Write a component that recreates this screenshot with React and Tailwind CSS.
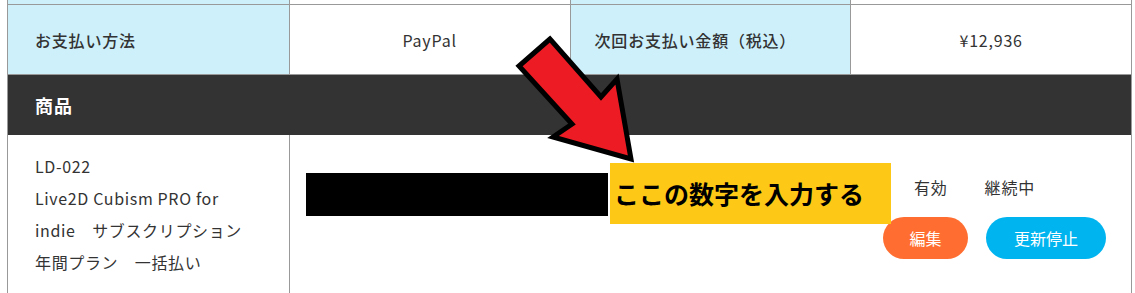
import React from 'react';

const font = { fontFamily: '"Noto Sans CJK JP", "Noto Sans", sans-serif' };

export default function App() {
  return (
    <div className="relative w-[1135px] h-[293px] overflow-hidden bg-white text-[#333]" style={font}>
      <div className="ml-[7px] w-[1125px] border-x border-[#999]">
        {/* partial row above */}
        <div className="grid grid-cols-4 h-[5px] border-b border-[#999]">
          <div className="bg-[#cdf0fb]" />
          <div className="border-l border-[#999]" />
          <div className="bg-[#cdf0fb] border-l border-[#999]" />
          <div className="border-l border-[#999]" />
        </div>

        {/* payment row */}
        <div className="grid grid-cols-4 h-[70px] border-b border-[#999] text-[16px] tracking-[0.05em]">
          <div className="bg-[#cdf0fb] flex items-center pl-[27px] font-medium">お支払い方法</div>
          <div className="border-l border-[#999] flex items-center justify-center">PayPal</div>
          <div className="bg-[#cdf0fb] border-l border-[#999] flex items-center justify-center pr-[30px] font-medium">次回お支払い金額（税込）</div>
          <div className="border-l border-[#999] flex items-center justify-center">¥12,936</div>
        </div>

        {/* section header */}
        <div className="h-[60px] bg-[#333] flex items-center pl-[27px] text-white text-[18px] font-bold tracking-[0.05em]">
          商品
        </div>

        {/* product row */}
        <div className="grid grid-cols-[281px_1fr] h-[158px]">
          <div className="flex items-center pl-[27px] text-[16px] leading-[32px] tracking-[0.04em]">
            <div>
              <div>LD-022</div>
              <div>Live2D Cubism PRO for</div>
              <div>indie　サブスクリプション</div>
              <div>年間プラン　一括払い</div>
            </div>
          </div>
          <div className="relative border-l border-[#999] flex pl-[16px] pr-[25px]">
            <div className="mt-[38px] w-[302px] h-[43px] bg-black" />
            <div className="ml-auto pt-[40px] flex flex-col">
              <div className="flex gap-[37px] pl-[31px] text-[16px] leading-[24px] tracking-[0.05em]">
                <span>有効</span>
                <span>継続中</span>
              </div>
              <div className="flex gap-[18px] mt-[18px]">
                <button className="w-[85px] h-[42px] rounded-full bg-[#ff6e30] text-white text-[16px]">編集</button>
                <button className="w-[120px] h-[42px] rounded-full bg-[#00b4ef] text-white text-[16px]">更新停止</button>
              </div>
            </div>
            <div className="absolute left-[320px] top-[28px] w-[281px] h-[61px] bg-[#fec817] flex items-center pl-[4px] text-black text-[25px] font-bold">
              ここの数字を入力する
            </div>
          </div>
        </div>
      </div>

      {/* annotation arrow */}
      <svg className="absolute left-0 top-0" width="1135" height="293" viewBox="0 0 1135 293">
        <polygon
          points="550,39 519,66 572,124 553,137 631,159 617,79 601,97"
          fill="#ed1c24"
          stroke="#000"
          strokeWidth="5"
          strokeLinejoin="miter"
        />
      </svg>
    </div>
  );
}
